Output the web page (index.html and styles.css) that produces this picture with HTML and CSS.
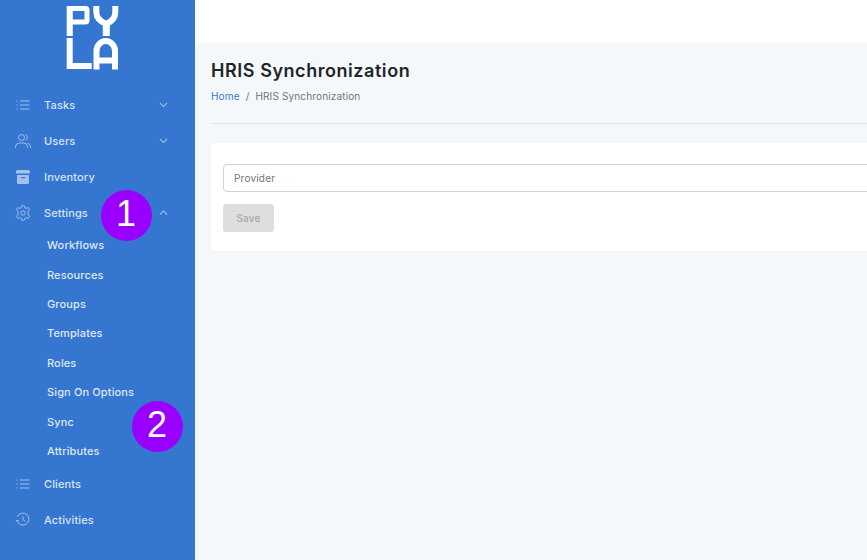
FILE: index.html
```html
<!doctype html>
<html lang="en">
<head>
    <meta charset="UTF-8">
    <title>HRIS Synchronization</title>
    <link rel="stylesheet" href="styles.css">
</head>
<body>
    <div class="app">
        <aside class="sidebar">
            <svg class="logo" width="60" height="70" viewBox="0 0 60 70" role="img" aria-label="Pyla">
                <path d="M9.700 36V8.500H25.500A1.500 1.500 0 0 1 27 10V20.500A1.500 1.500 0 0 1 25.500 22H9.700" fill="none" stroke="#fff" stroke-width="5"/>
                <path d="M9.700 36V6" fill="none" stroke="#fff" stroke-width="6"/>
                <path d="M36.300 6V12Q36.300 20 46.300 24Q55.300 20 55.300 12V6" fill="none" stroke="#fff" stroke-width="6"/>
                <path d="M46.300 22V36" fill="none" stroke="#fff" stroke-width="7"/>
                <path d="M9.700 38V66H31.700" fill="none" stroke="#fff" stroke-width="6"/>
                <path d="M36.500 69.500V51A9.250 10 0 0 1 55 51V69.500M36.500 60.500H55" fill="none" stroke="#fff" stroke-width="6"/>
            </svg>

            <nav class="nav">
                <a class="nav-item">
                    <svg class="nav-icon" viewBox="0 0 16 16"><path d="M5 4H14.500M5 8H14.500M5 12H14.500M1.500 4H2.500M1.500 8H2.500M1.500 12H2.500"/></svg>
                    <span class="nav-label">Tasks</span>
                    <svg class="chevron" viewBox="0 0 10 6"><path d="M1 1L5 5L9 1"/></svg>
                </a>
                <a class="nav-item">
                    <svg class="nav-icon" viewBox="0 0 16 16"><circle cx="6.500" cy="4.500" r="3"/><path d="M.5 15V13.500A4 4 0 0 1 4.500 10H8.500A4 4 0 0 1 12.500 13.500V15M10.500 1.700A3 3 0 0 1 10.500 7.300M12.500 10.200A4 4 0 0 1 15.500 13.500V15"/></svg>
                    <span class="nav-label">Users</span>
                    <svg class="chevron" viewBox="0 0 10 6"><path d="M1 1L5 5L9 1"/></svg>
                </a>
                <a class="nav-item">
                    <svg class="nav-icon solid" viewBox="0 0 16 16"><path d="M2.500 1H13.500A1.500 1.500 0 0 1 15 2.500V4.500H1V2.500A1.500 1.500 0 0 1 2.500 1ZM2 6H14V13.500A1.500 1.500 0 0 1 12.500 15H3.500A1.500 1.500 0 0 1 2 13.500ZM6 8V9.200H10V8Z"/></svg>
                    <span class="nav-label">Inventory</span>
                </a>
                <a class="nav-item">
                    <svg class="nav-icon" viewBox="0 0 16 16"><circle cx="8" cy="8" r="2.200"/><path d="M6.700.8H9.300L9.800 2.700L11.300 3.400L13.100 2.500L14.500 4.700L13.100 6.100V9.800L14.500 11.300L13.100 13.500L11.300 12.600L9.800 13.300L9.300 15.200H6.700L6.200 13.300L4.700 12.600L2.900 13.500L1.500 11.300L2.900 9.800V6.100L1.500 4.700L2.900 2.500L4.700 3.400L6.200 2.700Z" stroke-linejoin="round"/></svg>
                    <span class="nav-label">Settings</span>
                    <svg class="chevron" viewBox="0 0 10 6"><path d="M1 5L5 1L9 5"/></svg>
                </a>
                <div class="subnav">
                    <a class="subnav-item">Workflows</a>
                    <a class="subnav-item">Resources</a>
                    <a class="subnav-item">Groups</a>
                    <a class="subnav-item">Templates</a>
                    <a class="subnav-item">Roles</a>
                    <a class="subnav-item">Sign On Options</a>
                    <a class="subnav-item">Sync</a>
                    <a class="subnav-item">Attributes</a>
                </div>
                <a class="nav-item">
                    <svg class="nav-icon" viewBox="0 0 16 16"><path d="M5 4H14.500M5 8H14.500M5 12H14.500M1.500 4H2.500M1.500 8H2.500M1.500 12H2.500"/></svg>
                    <span class="nav-label">Clients</span>
                </a>
                <a class="nav-item">
                    <svg class="nav-icon" viewBox="0 0 16 16"><path d="M2.300 5.500A6 6 0 1 1 2 8.500M1 8.500L2.300 10L3.800 8.500M8 4.800V8.300L10.300 9.800" transform="translate(0 -.5)"/></svg>
                    <span class="nav-label">Activities</span>
                </a>
            </nav>
        </aside>

        <div class="main">
            <div class="topbar"></div>
            <main class="content">
                <h1 class="page-title">HRIS Synchronization</h1>
                <div class="breadcrumb">
                    <a class="crumb-link">Home</a>
                    <span class="crumb-sep">/</span>
                    <span>HRIS Synchronization</span>
                </div>
                <hr class="divider">
                <section class="card">
                    <input class="field" type="text" placeholder="Provider">
                    <button class="save-btn" disabled>Save</button>
                </section>
            </main>
        </div>
    </div>

    <!-- callouts over the sidebar -->
    <div class="callout callout-one">1</div>
    <div class="callout callout-two">2</div>
</body>
</html>
```

FILE: styles.css
```css
html, body {
    margin: 0;
    padding: 0;
    height: 100%;
    overflow: hidden;
}

body {
    font-family: Inter, "Noto Sans", sans-serif;
    background: #fff;
}

.app {
    display: flex;
    width: 1200px;
    height: 560px;
}

/* Sidebar */
.sidebar {
    flex: 0 0 195px;
    background: #3577d0;
    display: flex;
    flex-direction: column;
}

.logo {
    display: block;
    margin-left: 60px;
    margin-bottom: 17px;
}

.nav {
    display: flex;
    flex-direction: column;
}

.nav-item {
    display: flex;
    align-items: center;
    height: 36px;
    padding-left: 15px;
    color: rgba(255, 255, 255, 0.82);
    font-size: 11px;
    font-weight: 500;
    letter-spacing: 0.13px;
}

.nav-icon {
    flex: 0 0 16px;
    width: 16px;
    height: 16px;
    margin-right: 13px;
    fill: none;
    stroke: #a3c1ec;
    stroke-width: 1;
}

.nav-icon.solid {
    fill: #a3c1ec;
    fill-rule: evenodd;
    stroke: none;
}

.nav-label {
    flex: 1;
}

.chevron {
    width: 9px;
    height: 5.500px;
    margin-right: 27px;
    fill: none;
    stroke: #a3c1ec;
    stroke-width: 1.2;
}

.subnav {
    display: flex;
    flex-direction: column;
    margin-top: -0.5px;
}

.subnav-item {
    display: flex;
    align-items: center;
    height: 29.4px;
    padding-left: 47px;
    color: rgba(255, 255, 255, 0.85);
    font-size: 11px;
    font-weight: 500;
    letter-spacing: 0.13px;
}

/* Main area */
.main {
    flex: 1;
    display: flex;
    flex-direction: column;
}

.topbar {
    height: 42px;
    background: #fff;
}

.content {
    flex: 1;
    background: #f5f8fb;
    border-top-left-radius: 5px;
    padding: 18px 16px 0;
}

.page-title {
    margin: 0;
    color: #212529;
    font-size: 18px;
    font-weight: 600;
    line-height: 22px;
    letter-spacing: 0.55px;
}

.breadcrumb {
    display: flex;
    margin-top: 7px;
    color: #6c757d;
    font-size: 10px;
    line-height: 14px;
    letter-spacing: 0.15px;
}

.crumb-link {
    color: #3577d0;
}

.crumb-sep {
    margin: 0 6px;
}

.divider {
    margin: 20px 0 19px;
    border: 0;
    border-top: 1px solid #dde2e8;
}

.card {
    background: #fff;
    border-radius: 4px;
    padding: 21px 12px 19px;
    box-shadow: 0 1px 3px rgba(0, 0, 0, 0.03);
}

.field {
    display: block;
    box-sizing: border-box;
    width: 100%;
    height: 28px;
    padding: 0 10px;
    border: 1px solid #cfd1d4;
    border-radius: 4px;
    background: #fff;
    font-family: inherit;
    font-size: 10px;
    letter-spacing: 0.2px;
}

.field::placeholder {
    color: #6c757d;
    opacity: 1;
}

.save-btn {
    display: block;
    width: 51px;
    height: 28px;
    margin-top: 12px;
    padding: 0;
    border: 0;
    border-radius: 3px;
    background: #dedede;
    color: #a8a8a8;
    font-family: inherit;
    font-size: 10px;
    font-weight: 500;
    letter-spacing: 0.2px;
}

/* Numbered callouts */
.callout {
    position: absolute;
    width: 51px;
    height: 51px;
    border-radius: 50%;
    background: #9900ff;
    color: #fff;
    font-family: "Liberation Sans", sans-serif;
    font-size: 36px;
    line-height: 47px;
    text-align: center;
}

.callout-one {
    left: 100.500px;
    top: 190px;
}

.callout-two {
    left: 131.500px;
    top: 401px;
}
```
